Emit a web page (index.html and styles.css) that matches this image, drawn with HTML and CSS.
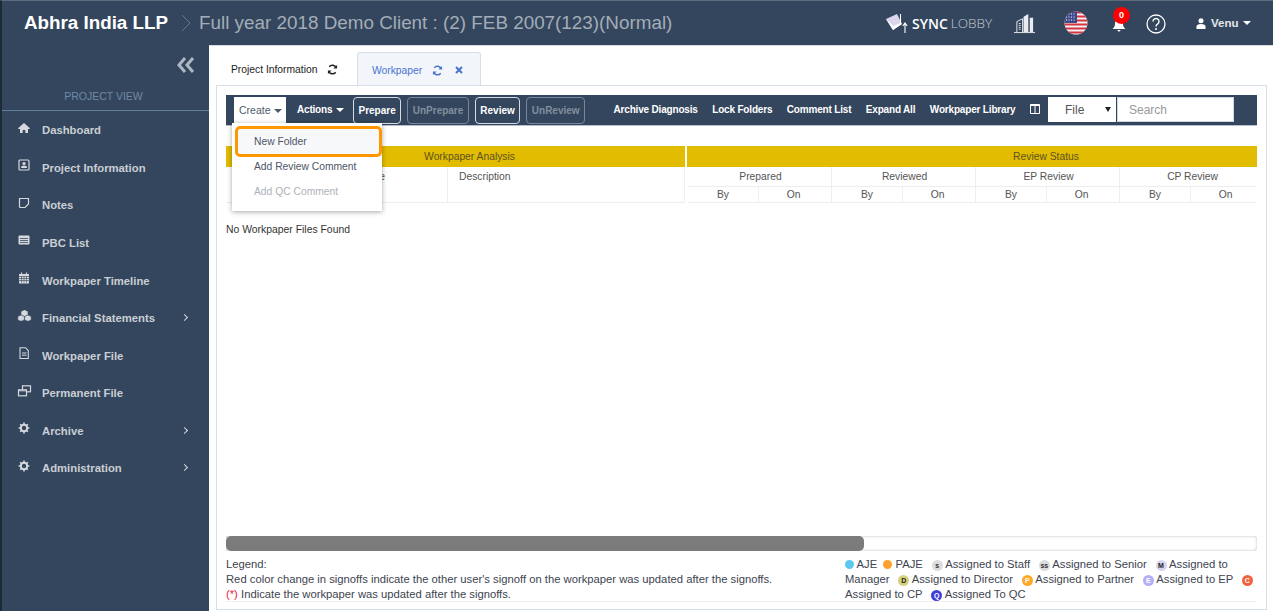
FILE: index.html
```html
<!DOCTYPE html>
<html lang="en">
<head>
  <meta charset="UTF-8" />
  <title>Workpaper</title>
  <link rel="stylesheet" href="styles.css">
</head>
<body>

<header class="topbar">
  <span class="org">Abhra India LLP</span>
  <svg class="crumb" viewBox="0 0 10 18"><path d="M1 1l8 8-8 8" fill="none" stroke="#67788c" stroke-width="1"/></svg>
  <span class="project">Full year 2018 Demo Client : (2) FEB 2007(123)(Normal)</span>
  <div class="top-right">
    <div class="sync">
      <svg class="sync-logo" viewBox="0 0 22 19">
        <path d="M0 5l11-5 5 10-9 6z" fill="#d9d6ee"/>
        <path d="M0 5l7 11 9-6-1.500-1-7 3z" fill="#fff"/>
        <path d="M14.500 0v10M19 9v10M16.800 12L19 9l2.200 3" fill="none" stroke="#fff" stroke-width="1.100"/>
      </svg>
      <span class="sync-a">SYNC</span> <span class="sync-b">LOBBY</span>
    </div>
    <svg class="tower" viewBox="0 0 22 22">
      <path d="M3 9l6-3v14M3 9v11M5 11h2M5 13h2M5 15h2M5 17h2" fill="none" stroke="#e8ebef" stroke-width="1"/>
      <path d="M10 20V4l5-3v19zM16.500 20V5H20v15z" fill="#e8ebef"/>
      <path d="M0 20.500h22" stroke="#e8ebef"/>
    </svg>
    <svg class="flag" viewBox="0 0 24 24">
      <defs><clipPath id="flag-clip"><circle cx="12" cy="12" r="11.500"/></clipPath></defs>
      <g clip-path="url(#flag-clip)">
        <rect width="24" height="24" fill="#f3f3f5"/>
        <path d="M0 1.500h24M0 5.500h24M0 9.500h24M0 13.500h24M0 17.500h24M0 21.500h24" stroke="#d8343f" stroke-width="2"/>
        <rect width="13" height="12" fill="#3d4a8c"/>
        <path d="M2 3h9M2 6h9M2 9h9" stroke="#fff" stroke-width="1" stroke-dasharray="1 1.500"/>
      </g>
    </svg>
    <div class="bell">
      <svg viewBox="0 0 14 14"><path d="M7 1.500a4 4 0 0 1 4 4c0 3 1 4 2.500 5.500H.5C2 9.500 3 8.500 3 5.500a4 4 0 0 1 4-4zM5.500 12h3a1.500 1.500 0 0 1-3 0z" fill="#fff"/></svg>
      <span class="bell-count">0</span>
    </div>
    <svg class="help" viewBox="0 0 20 20">
      <circle cx="10" cy="10" r="9" fill="none" stroke="#fff" stroke-width="1.300"/>
      <path d="M7 7.500a3 3 0 1 1 4.500 2.600c-1 .6-1.500 1.100-1.500 2.400" fill="none" stroke="#fff" stroke-width="1.400"/>
      <circle cx="10" cy="15" r="1" fill="#fff"/>
    </svg>
    <div class="user">
      <svg viewBox="0 0 10 11"><circle cx="5" cy="2.800" r="2.500" fill="#fff"/><path d="M0.500 11V8.500C.5 7 2 6 5 6s4.500 1 4.500 2.500V11z" fill="#fff"/></svg>
      <span>Venu</span>
      <i class="caret"></i>
    </div>
  </div>
</header>

<div class="layout">
  <aside class="sidebar">
    <div class="side-head">
      <svg class="collapse" viewBox="0 0 18 16"><path d="M8 1L2 8l6 7M16 1l-6 7 6 7" fill="none" stroke="#aeb8c4" stroke-width="3"/></svg>
      <div class="side-title">PROJECT VIEW</div>
    </div>
    <nav>
      <a class="nav-item"><svg viewBox="0 0 12 12"><path d="M6 1l6 5.300-.7.700H10v4H7.300V8H4.700v3H2V7H.7L0 6.300z" fill="#d5d8dd"/></svg><span>Dashboard</span></a>
      <a class="nav-item"><svg viewBox="0 0 12 12"><rect x="1" y="1" width="10" height="10" rx="1" fill="none" stroke="#d5d8dd" stroke-width="1.200"/><circle cx="6" cy="4.500" r="1.600" fill="#d5d8dd"/><path d="M3 9c0-1.800 1.200-2.500 3-2.500S9 7.200 9 9z" fill="#d5d8dd"/></svg><span>Project Information</span></a>
      <a class="nav-item"><svg viewBox="0 0 12 12"><path d="M1.500 1.500h9V7L7 10.500H2.500a1 1 0 0 1-1-1z" fill="none" stroke="#d5d8dd" stroke-width="1.200"/></svg><span>Notes</span></a>
      <a class="nav-item"><svg viewBox="0 0 12 12"><rect x=".5" y="1.500" width="11" height="9" rx="1" fill="#d5d8dd"/><path d="M2 4.500h8M2 6.500h8M2 8.500h8" stroke="#34465d" stroke-width=".8"/></svg><span>PBC List</span></a>
      <a class="nav-item"><svg viewBox="0 0 12 12"><rect x="1" y="2" width="10" height="9.500" fill="#d5d8dd"/><path d="M3.500 .5v2M8.500 .5v2" stroke="#d5d8dd" stroke-width="1.200"/><path d="M1 4.500h10M1 6.500h10M1 8.500h10M3.500 4.500v6M6 4.500v6M8.500 4.500v6" stroke="#34465d" stroke-width=".6"/></svg><span>Workpaper Timeline</span></a>
      <a class="nav-item"><svg class="wide" viewBox="0 0 15 13"><path d="M7.500 0l3.500 1.500v3.700L7.500 6.700 4 5.200V1.500z" fill="#d5d8dd"/><path d="M3.800 5.500l3.500 1.500v3.700l-3.500 1.500L.3 10.700V7zM11.200 5.500l3.500 1.500v3.700l-3.500 1.500-3.500-1.500V7z" fill="#d5d8dd" stroke="#34465d" stroke-width=".5"/></svg><span>Financial Statements</span><i class="chev"></i></a>
      <a class="nav-item"><svg viewBox="0 0 12 12"><path d="M2 .7h5.500L10.300 3.500v8H2z" fill="none" stroke="#d5d8dd" stroke-width="1.100"/><path d="M4 6h4.500M4 8.200h4.500" stroke="#d5d8dd"/></svg><span>Workpaper File</span></a>
      <a class="nav-item"><svg class="wide" viewBox="0 0 14 12"><rect x="5" y=".8" width="8" height="6" fill="none" stroke="#d5d8dd" stroke-width="1.200"/><rect x="1" y="4.800" width="8" height="6" fill="#34465d" stroke="#d5d8dd" stroke-width="1.200"/><path d="M1 5.800h8" stroke="#d5d8dd"/></svg><span>Permanent File</span></a>
      <a class="nav-item"><svg viewBox="0 0 12 12"><circle cx="6" cy="6" r="3.200" fill="none" stroke="#d5d8dd" stroke-width="2"/><path d="M6 .6v2M6 9.400v2M.6 6h2M9.400 6h2M2.200 2.200l1.400 1.400M8.400 8.400l1.400 1.400M2.200 9.800l1.400-1.400M8.400 3.600l1.400-1.400" stroke="#d5d8dd" stroke-width="1.600"/></svg><span>Archive</span><i class="chev"></i></a>
      <a class="nav-item"><svg viewBox="0 0 12 12"><circle cx="6" cy="6" r="3.200" fill="none" stroke="#d5d8dd" stroke-width="2"/><path d="M6 .6v2M6 9.400v2M.6 6h2M9.400 6h2M2.200 2.200l1.400 1.400M8.400 8.400l1.400 1.400M2.200 9.800l1.400-1.400M8.400 3.600l1.400-1.400" stroke="#d5d8dd" stroke-width="1.600"/></svg><span>Administration</span><i class="chev"></i></a>
    </nav>
  </aside>

  <main class="content">
    <div class="tabs">
      <div class="tab">
        <span>Project Information</span>
        <svg class="tab-icon" viewBox="0 0 12 12"><path d="M10 4.200A4.300 4.300 0 0 0 2.500 3M2 7.800A4.300 4.300 0 0 0 9.500 9" fill="none" stroke="#222" stroke-width="1.600"/><path d="M11 1v4H7zM1 11V7h4z" fill="#222"/></svg>
      </div>
      <div class="tab tab-active">
        <span>Workpaper</span>
        <svg class="tab-icon" viewBox="0 0 12 12"><path d="M10 4.200A4.300 4.300 0 0 0 2.500 3M2 7.800A4.300 4.300 0 0 0 9.500 9" fill="none" stroke="#4a73d1" stroke-width="1.600"/><path d="M11 1v4H7zM1 11V7h4z" fill="#4a73d1"/></svg>
        <svg class="tab-close" viewBox="0 0 8 8"><path d="M1 1l6 6M7 1L1 7" stroke="#4a73d1" stroke-width="2"/></svg>
      </div>
    </div>

    <section class="panel">
      <div class="toolbar">
        <div class="tool-menu tool-open">Create <i class="caret caret-dark"></i></div>
        <div class="tool-menu">Actions <i class="caret"></i></div>
        <button class="tool-btn">Prepare</button>
        <button class="tool-btn tool-off">UnPrepare</button>
        <button class="tool-btn">Review</button>
        <button class="tool-btn tool-off">UnReview</button>
        <div class="tool-links">
          <a>Archive Diagnosis</a>
          <a>Lock Folders</a>
          <a>Comment List</a>
          <a>Expand All</a>
          <a>Workpaper Library</a>
          <svg class="col-icon" viewBox="0 0 10 10"><path d="M.5.5h9v9h-9zM5 .5v9" fill="none" stroke="#fff"/><path d="M.5.500h9v1.500h-9z" fill="#fff"/></svg>
        </div>
        <div class="file-select">File <i class="select-arrow"></i></div>
        <div class="search">Search</div>
      </div>

      <div class="create-menu">
        <div class="menu-item menu-hot">New Folder</div>
        <div class="menu-item">Add Review Comment</div>
        <div class="menu-item menu-off">Add QC Comment</div>
      </div>

      <div class="tables">
        <div class="analysis">
          <div class="band">Workpaper Analysis</div>
          <div class="analysis-cols">
            <div class="a-name">File Name</div>
            <div class="a-desc">Description</div>
          </div>
        </div>
        <div class="review">
          <div class="band">Review Status</div>
          <div class="review-cols">
            <div class="r-group"><div class="r-title">Prepared</div><div class="r-sub"><span>By</span><span>On</span></div></div>
            <div class="r-group"><div class="r-title">Reviewed</div><div class="r-sub"><span>By</span><span>On</span></div></div>
            <div class="r-group"><div class="r-title">EP Review</div><div class="r-sub"><span>By</span><span>On</span></div></div>
            <div class="r-group"><div class="r-title">CP Review</div><div class="r-sub"><span>By</span><span>On</span></div></div>
          </div>
        </div>
      </div>

      <p class="empty">No Workpaper Files Found</p>

      <div class="hscroll"><div class="hscroll-thumb"></div></div>

      <div class="legend">
        <div class="legend-left">
          <div>Legend:</div>
          <div>Red color change in signoffs indicate the other user's signoff on the workpaper was updated after the signoffs.</div>
          <div><span class="star">(*)</span> <span>Indicate the workpaper was updated after the signoffs.</span></div>
        </div>
        <div class="legend-right">
          <i class="dot dot-aje"></i> <span>AJE</span> &nbsp;<i class="dot dot-paje"></i> <span>PAJE</span> &nbsp;<b class="mark m-s">s</b> <span>Assigned to Staff</span> &nbsp;<b class="mark m-ss">ss</b> <span>Assigned to Senior</span> &nbsp;<b class="mark m-m">M</b> <span>Assigned to</span> <span>Manager</span> &nbsp;<b class="mark m-d">D</b> <span>Assigned to Director</span> &nbsp;<b class="mark m-p">P</b> <span>Assigned to Partner</span> &nbsp;<b class="mark m-e">E</b> <span>Assigned to EP</span> &nbsp;<b class="mark m-c">C</b> <span>Assigned to CP</span> &nbsp;<b class="mark m-q">Q</b> <span>Assigned To QC</span>
        </div>
      </div>
    </section>
  </main>
</div>

</body>
</html>
```

FILE: styles.css
```css
* {
  box-sizing: border-box;
}

body {
  margin: 0;
  height: 611px;
  overflow: hidden;
  font-family: "Liberation Sans", Arial, sans-serif;
  background: #fff;
  color: #333;
}

/* Top bar */
.topbar {
  height: 45px;
  background: #34465d;
  border-top: 1px solid #5d6c7c;
  border-left: 2px solid #1d2a38;
  padding-left: 22px;
  display: flex;
  align-items: center;
}

.org {
  font-size: 18.800px;
  font-weight: bold;
  color: #fff;
}

.crumb {
  width: 10px;
  height: 18px;
  margin: 0 8px 0 13px;
}

.project {
  font-size: 18.850px;
  color: #a3adb8;
}

.top-right {
  margin-left: auto;
  display: flex;
  align-items: center;
  height: 100%;
}

.sync {
  display: flex;
  align-items: center;
  width: 106px;
  margin-right: 22px;
  white-space: nowrap;
}

.sync-logo {
  width: 22px;
  height: 19px;
  margin-right: 4px;
  flex: none;
}

.sync-a {
  color: #fff;
  font-family: "Open Sans", sans-serif;
  font-weight: 600;
  margin-right: 3px;
  font-size: 14px;
}

.sync-b {
  color: #c6ccd4;
  font-family: "Open Sans", sans-serif;
  font-weight: 300;
  font-size: 13.500px;
}

.tower {
  width: 21px;
  height: 21px;
  margin-right: 29px;
}

.flag {
  width: 24px;
  height: 24px;
  margin-right: 24px;
}

.bell {
  position: relative;
  width: 14px;
  height: 14px;
  margin: 3px 20px 0 0;
}

.bell svg {
  display: block;
  width: 14px;
  height: 14px;
}

.bell-count {
  position: absolute;
  left: 1px;
  top: -11px;
  width: 17px;
  height: 17px;
  border-radius: 50%;
  background: #f00;
  color: #fff;
  font-size: 9px;
  font-weight: bold;
  line-height: 17px;
  text-align: center;
}

.help {
  width: 20px;
  height: 20px;
  margin: 2px 30px 0 0;
}

.user {
  display: flex;
  align-items: center;
  width: 66px;
  margin-right: 11px;
  font-size: 11.500px;
  font-weight: bold;
  color: #e4e7eb;
}

.user svg {
  width: 10px;
  height: 11px;
  margin-right: 5px;
}

.caret {
  display: inline-block;
  width: 0;
  height: 0;
  margin-left: 5px;
  border-left: 4px solid transparent;
  border-right: 4px solid transparent;
  border-top: 4px solid #fff;
  vertical-align: middle;
}

.tool-menu .caret {
  margin-left: 1px;
}

.caret-dark {
  border-top-color: #50596a;
}

/* Layout */
.layout {
  display: flex;
  height: 566px;
}

/* Sidebar */
.sidebar {
  width: 209px;
  flex: none;
  background: #34465d;
  border-left: 2px solid #1d2a38;
}

.side-head {
  height: 66px;
  border-bottom: 1px solid #5f7c99;
  position: relative;
}

.collapse {
  position: absolute;
  left: 175px;
  top: 12px;
  width: 18px;
  height: 16px;
}

.side-title {
  padding: 45px 4px 0 0;
  text-align: center;
  font-size: 10.500px;
  color: #6e89a6;
}

.nav-item {
  height: 37.570px;
  display: flex;
  align-items: center;
  position: relative;
  padding: 1px 0 0 16px;
  font-size: 11.300px;
  font-weight: bold;
  color: #c9ced4;
}

.nav-item svg {
  width: 12px;
  height: 12px;
  flex: none;
  margin: -5px 12px 0 0;
}

.nav-item svg.wide {
  width: 15px;
  margin: -5px 10px 0 -1px;
}

.chev {
  position: absolute;
  left: 180px;
  top: 16px;
  width: 5px;
  height: 5px;
  border-top: 1.500px solid #d5d8dd;
  border-right: 1.500px solid #d5d8dd;
  transform: rotate(45deg);
}

/* Content */
.content {
  flex: 1;
  min-width: 0;
  padding: 7px 6px 1px 7px;
  display: flex;
  flex-direction: column;
  border-top: 1px solid #d8dce2;
}

.tabs {
  height: 33px;
  margin-top: -1px;
  display: flex;
  flex: none;
}

.tab {
  width: 141px;
  display: flex;
  align-items: center;
  padding: 2px 0 0 15px;
  font-size: 10.300px;
  color: #222;
}

.tab-icon {
  width: 11px;
  height: 11px;
  margin-left: 10px;
}

.tab-active {
  width: 124px;
  padding-left: 14px;
  background: #f2f5f9;
  border: 1px solid #d5dfe9;
  border-bottom: none;
  border-radius: 3px 3px 0 0;
  color: #4a73d1;
}

.tab-close {
  width: 8px;
  height: 8px;
  margin-left: 12px;
}

.panel {
  flex: 1;
  position: relative;
  border: 1px solid #d5dfe9;
  padding: 9px 9px 7px;
  display: flex;
  flex-direction: column;
}

/* Toolbar */
.toolbar {
  height: 31px;
  flex: none;
  background: #34465d;
  padding: 2px 23px 0 8px;
  border-bottom: 1px solid #b5bfcb;
  display: flex;
  align-items: flex-start;
  font-size: 10px;
  font-weight: bold;
  color: #fff;
  white-space: nowrap;
}

.tool-menu {
  height: 29px;
  width: 60px;
  padding-top: 7px;
  padding-left: 11px;
  letter-spacing: -0.2px;
}

.tool-open {
  width: 52px;
  padding-left: 5px;
  background: #fff;
  color: #50596a;
  font-size: 10.500px;
  font-weight: normal;
  letter-spacing: 0;
}

.tool-btn {
  height: 27px;
  margin-left: 6px;
  padding: 0 4.500px;
  background: none;
  border: 1px solid #d6dbe2;
  border-radius: 4px;
  font: bold 10px "Liberation Sans", Arial, sans-serif;
  color: #fff;
}

.tool-menu + .tool-btn {
  margin-left: 7px;
}

.tool-off {
  border-color: #77879a;
  color: #818f9f;
}

.tool-links {
  flex: 1;
  display: flex;
  justify-content: flex-end;
  align-items: center;
  gap: 14.500px;
  height: 24px;
  padding-right: 8px;
  font-size: 10px;
  letter-spacing: -0.18px;
}

.col-icon {
  width: 10px;
  height: 10px;
}

.file-select {
  width: 68px;
  height: 25px;
  flex: none;
  background: #fff;
  color: #555;
  font-size: 12px;
  font-weight: normal;
  padding: 6px 0 0 17px;
  position: relative;
}

.select-arrow {
  position: absolute;
  right: 5px;
  top: 10px;
  border-left: 3px solid transparent;
  border-right: 3px solid transparent;
  border-top: 5px solid #222;
}

.search {
  width: 117px;
  height: 25px;
  flex: none;
  margin-left: 1px;
  background: #fff;
  border: 1px solid #cfd8e2;
  color: #9a9a9a;
  font-size: 12px;
  font-weight: normal;
  padding: 5px 0 0 11px;
}

/* Dropdown over the table */
.create-menu {
  position: absolute;
  left: 15px;
  top: 37px;
  width: 150px;
  height: 88px;
  background: #fff;
  box-shadow: 0 1px 5px rgba(0,0,0,0.35);
  z-index: 5;
  padding-top: 3px;
}

.menu-item {
  height: 25px;
  padding-left: 22px;
  font-size: 10.300px;
  line-height: 25px;
  color: #4d5666;
}

.menu-hot {
  width: 147px;
  height: 31px;
  margin-left: 3px;
  margin-bottom: -3px;
  padding-left: 16px;
  line-height: 25px;
  border: 3px solid #ff9800;
  border-radius: 5px;
  background: #f7f8fa;
}

.menu-off {
  color: #aeb2b8;
}

/* Tables */
.tables {
  display: flex;
  gap: 2px;
  margin-top: 20px;
  flex: none;
  font-size: 10.300px;
  color: #555;
}

.band {
  height: 21px;
  background: #e2bc00;
  color: #5b5320;
  text-align: center;
  line-height: 21px;
}

.analysis {
  width: 459px;
  flex: none;
}

.analysis .band {
  padding-left: 28px;
}

.analysis-cols {
  height: 36px;
  display: flex;
  border-bottom: 1px solid #eee;
  border-right: 1px solid #eee;
}

.a-name {
  width: 222px;
  padding: 4px 0 0 112px;
  border-right: 1px solid #eee;
}

.a-desc {
  padding: 4px 0 0 11px;
}

.review {
  flex: 1;
  min-width: 0;
  overflow: hidden;
}

.review .band {
  width: 718px;
}

.review-cols {
  display: flex;
  width: 576px;
  height: 36px;
  margin-left: 1px;
  border-bottom: 1px solid #eee;
}

.r-group {
  width: 144px;
  flex: none;
  border-right: 1px solid #eee;
  text-align: center;
}

.r-title {
  height: 20px;
  padding-left: 2px;
  line-height: 19px;
  border-bottom: 1px solid #eee;
}

.r-sub {
  display: flex;
  line-height: 15px;
}

.r-sub span:first-child {
  width: 71px;
  border-right: 1px solid #eee;
}

.r-sub span:last-child {
  width: 72px;
  padding-right: 3px;
}

.empty {
  margin: 21px 0 0;
  font-size: 10.400px;
  color: #333;
}

/* Horizontal scroll */
.hscroll {
  margin-top: auto;
  height: 15px;
  flex: none;
  background: #fff;
  border-radius: 0 3px 3px 0;
  box-shadow: inset 0 0 3px #bbb;
}

.hscroll-thumb {
  width: 638px;
  height: 15px;
  background: #7b7b7b;
  border-radius: 5px;
}

/* Legend */
.legend {
  display: flex;
  justify-content: space-between;
  flex: none;
  height: 51px;
  padding-top: 6px;
  font-size: 11.260px;
  line-height: 15px;
  color: #3d4450;
  border-bottom: 1px solid #f0f0f0;
}

.legend-right {
  width: 412px;
  flex: none;
}

.star {
  color: #e8203a;
}

.dot {
  display: inline-block;
  width: 9px;
  height: 9px;
  border-radius: 50%;
  vertical-align: -1px;
}

.dot-aje {
  background: #5cc8f0;
}

.dot-paje {
  background: #ff9f2e;
}

.mark {
  display: inline-block;
  width: 11px;
  height: 11px;
  border-radius: 50%;
  font-size: 7px;
  line-height: 11px;
  text-align: center;
  margin-left: 2.500px;
}

.m-s, .m-ss { background: #dcdcdc; color: #333; }
.m-m { background: #d8d6ee; color: #222; }
.m-d { background: #d6d27e; color: #222; }
.m-p { background: #ffa726; color: #fff; }
.m-e { background: #b3aef5; color: #fff; }
.m-c { background: #f4613c; color: #fff; }
.m-q { background: #3f3fd8; color: #fff; }
```
